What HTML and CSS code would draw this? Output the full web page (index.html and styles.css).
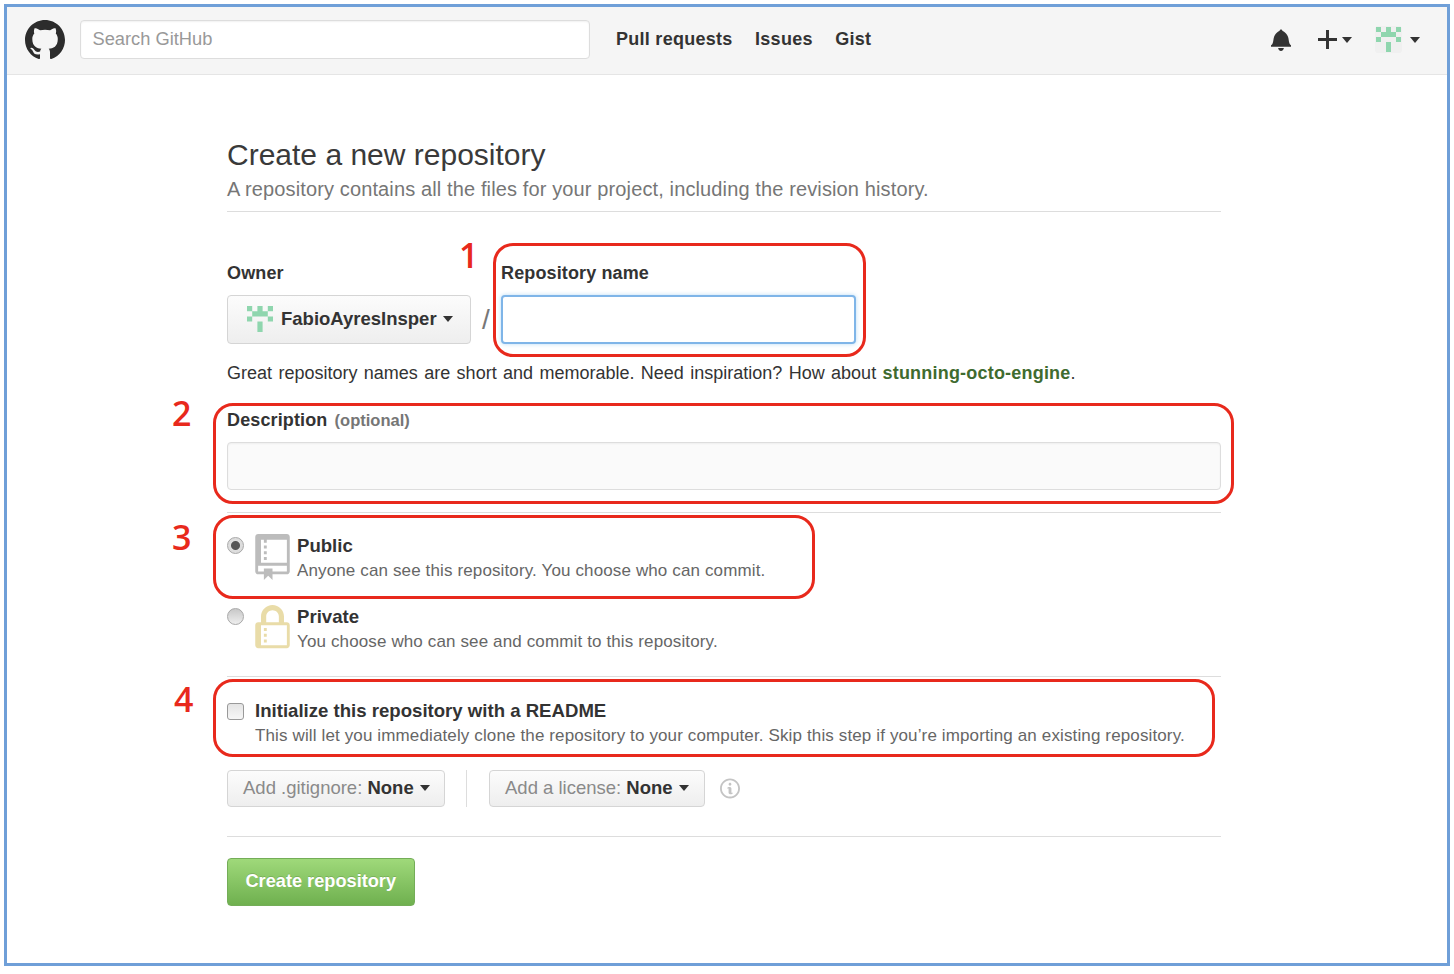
FILE: index.html
```html
<!DOCTYPE html>
<html lang="en">
<head>
<meta charset="utf-8">
<title>Create a new repository</title>
<link rel="stylesheet" href="styles.css">
</head>
<body>
<svg class="defs" width="0" height="0" aria-hidden="true">
  <symbol id="identicon" viewBox="0 0 5 5">
    <path d="M0 0h1v1H0zM2 0h1v1H2zM4 0h1v1H4zM1 1h3v1H1zM0 2h1v1H0zM4 2h1v1H4zM2 3h1v2H2z"/>
  </symbol>
</svg>
<div class="frame">
  <header class="topbar">
    <svg class="logo" viewBox="0 0 16 16"><path d="M8 0C3.58 0 0 3.58 0 8c0 3.54 2.29 6.53 5.47 7.59.4.07.55-.17.55-.38 0-.19-.01-.82-.01-1.49-2.01.37-2.53-.49-2.69-.94-.09-.23-.48-.94-.82-1.13-.28-.15-.68-.52-.01-.53.63-.01 1.08.58 1.23.82.72 1.21 1.87.87 2.33.66.07-.52.28-.87.51-1.07-1.78-.2-3.64-.89-3.64-3.95 0-.87.31-1.59.82-2.15-.08-.2-.36-1.02.08-2.12 0 0 .67-.21 2.2.82.64-.18 1.32-.27 2-.27.68 0 1.36.09 2 .27 1.53-1.04 2.2-.82 2.2-.82.44 1.1.16 1.92.08 2.12.51.56.82 1.27.82 2.15 0 3.07-1.87 3.75-3.65 3.95.29.25.54.73.54 1.48 0 1.07-.01 1.93-.01 2.2 0 .21.15.46.55.38A8.013 8.013 0 0016 8c0-4.42-3.58-8-8-8z"/></svg>
    <div class="search">Search GitHub</div>
    <nav class="nav"><a>Pull requests</a><a>Issues</a><a>Gist</a></nav>
    <div class="tools">
      <svg class="bell" viewBox="0 0 14 16"><path d="M14 12v1H0v-1l.73-.58c.77-.77.81-2.55 1.19-4.42C2.69 3.23 6 2 6 2c0-.55.45-1 1-1s1 .45 1 1c0 0 3.39 1.23 4.16 5 .38 1.88.42 3.66 1.19 4.42l.66.58H14zm-7 4c1.11 0 2-.89 2-2H5c0 1.11.89 2 2 2z"/></svg>
      <div class="plus-group">
        <svg class="plus" viewBox="0 0 18 18"><path d="M7.6 0h2.8v7.6H18v2.8h-7.6V18H7.6v-7.6H0V7.6h7.6z"/></svg>
        <span class="caret"></span>
      </div>
      <div class="avatar-group">
        <div class="avatar"><svg class="identicon" viewBox="0 0 5 5"><use href="#identicon"/></svg></div>
        <span class="caret"></span>
      </div>
    </div>
  </header>

  <main class="page">
    <h1 class="title">Create a new repository</h1>
    <p class="lead">A repository contains all the files for your project, including the revision history.</p>

    <div class="owner-row">
      <div class="owner-col">
        <div class="label">Owner</div>
        <div class="owner-btn">
          <svg class="identicon small" viewBox="0 0 5 5"><use href="#identicon"/></svg>
          <span>FabioAyresInsper</span>
          <span class="caret"></span>
        </div>
      </div>
      <span class="slash">/</span>
      <div class="name-col">
        <div class="label">Repository name</div>
        <div class="name-input"></div>
      </div>
    </div>
    <p class="hint">Great repository names are short and memorable. Need inspiration? How about <strong>stunning-octo-engine</strong>.</p>

    <div class="label desc-label">Description <span class="optional">(optional)</span></div>
    <div class="desc-input"></div>

    <section class="visibility">
      <div class="choice">
        <span class="radio checked"></span>
        <svg class="choice-icon book" viewBox="0 0 12 16"><path d="M4 9H3V8h1v1zm0-3H3v1h1V6zm0-2H3v1h1V4zm0-2H3v1h1V2zm8-1v12c0 .55-.45 1-1 1H6v2l-1.5-1.5L3 16v-2H1c-.55 0-1-.45-1-1V1c0-.55.45-1 1-1h10c.55 0 1 .45 1 1zm-1 10H1v2h2v-1h3v1h5v-2zm0-9H2v8h9V2z"/></svg>
        <div class="choice-text">
          <div class="choice-title">Public</div>
          <div class="choice-desc">Anyone can see this repository. You choose who can commit.</div>
        </div>
      </div>
      <div class="choice">
        <span class="radio"></span>
        <svg class="choice-icon lock" viewBox="0 0 12 16"><path d="M4 13H3v-1h1v1zm8-6v7c0 .55-.45 1-1 1H1c-.55 0-1-.45-1-1V7c0-.55.45-1 1-1h1V4c0-2.2 1.8-4 4-4s4 1.8 4 4v2h1c.55 0 1 .45 1 1zM3.8 6h4.41V4c0-1.22-.98-2.2-2.2-2.2-1.22 0-2.2.98-2.2 2.2v2H3.8zM11 7H2v7h9V7zM4 8H3v1h1V8zm0 2H3v1h1v-1z"/></svg>
        <div class="choice-text">
          <div class="choice-title">Private</div>
          <div class="choice-desc">You choose who can see and commit to this repository.</div>
        </div>
      </div>
    </section>

    <section class="init">
      <div class="init-row">
        <span class="checkbox"></span>
        <div>
          <div class="choice-title">Initialize this repository with a README</div>
          <div class="choice-desc">This will let you immediately clone the repository to your computer. Skip this step if you’re importing an existing repository.</div>
        </div>
      </div>
      <div class="add-row">
        <div class="add-btn gitignore">Add .gitignore: <b>None</b><span class="caret"></span></div>
        <span class="vsep"></span>
        <div class="add-btn license">Add a license: <b>None</b><span class="caret"></span></div>
        <svg class="info" viewBox="0 0 14 16"><path d="M6.3 5.69a.942.942 0 01-.28-.7c0-.28.09-.52.28-.7.19-.18.42-.28.7-.28.28 0 .52.09.7.28.18.19.28.42.28.7 0 .28-.09.52-.28.7a1 1 0 01-.7.3c-.28 0-.52-.11-.7-.3zM8 7.99c-.02-.25-.11-.48-.31-.69-.2-.19-.42-.3-.69-.31H6c-.27.02-.48.13-.69.31-.2.2-.3.44-.31.69h1v3c.02.27.11.5.31.69.2.2.42.31.69.31h1c.27 0 .48-.11.69-.31.2-.19.3-.42.31-.69H8V7.98v.01zM7 2.3c-3.14 0-5.7 2.54-5.7 5.68 0 3.14 2.56 5.7 5.7 5.7s5.7-2.55 5.7-5.7c0-3.15-2.56-5.69-5.7-5.69v.01zM7 .98c3.86 0 7 3.14 7 7s-3.14 7-7 7-7-3.12-7-7 3.14-7 7-7z"/></svg>
      </div>
    </section>

    <div class="submit-row"><div class="create-btn">Create repository</div></div>
  </main>

  <div class="mark mark-1"></div><span class="num num-1">1</span>
  <div class="mark mark-2"></div><span class="num num-2">2</span>
  <div class="mark mark-3"></div><span class="num num-3">3</span>
  <div class="mark mark-4"></div><span class="num num-4">4</span>
</div>
</body>
</html>
```

FILE: styles.css
```css
* { box-sizing: border-box; }
html, body { margin: 0; padding: 0; background: #fff; }
body {
  font-family: "Liberation Sans", Arial, sans-serif;
  color: #333;
  padding: 4px;
  height: 974px;
  overflow: hidden;
}
.defs { position: absolute; }

.frame {
  position: relative;
  width: 1446px;
  height: 962px;
  border: 3px solid #6f9fd8;
  background: #fff;
}

/* top bar */
.topbar {
  display: flex;
  align-items: center;
  height: 68px;
  padding: 0 0 0 18px;
  background: #f5f5f5;
  border-bottom: 1px solid #e5e5e5;
}
.logo { width: 40px; height: 40px; fill: #2c2c2c; flex: none; margin-top: -2px; }
.search {
  width: 510px;
  height: 39px;
  margin-left: 15px;
  margin-top: -2px;
  padding: 0 0 2px 11.5px;
  display: flex;
  align-items: center;
  background: #fff;
  border: 1px solid #ddd;
  border-radius: 4px;
  color: #999;
  font-size: 18.3px;
  box-shadow: inset 0 1px 2px rgba(0, 0, 0, .06);
}
.nav { display: flex; gap: 22.5px; margin-left: 26px; margin-top: -2px; }
.nav a { font-size: 18px; font-weight: 700; color: #333; letter-spacing: .27px; }
.tools {
  display: flex;
  align-items: center;
  margin-left: auto;
  margin-top: -2px;
  padding-right: 27px;
}
.bell { width: 20px; height: 23px; fill: #333; }
.plus-group { display: flex; align-items: center; gap: 5px; margin-left: 27px; }
.plus { width: 19px; height: 19px; fill: #333; }
.avatar-group { display: flex; align-items: center; gap: 8px; margin-left: 23px; }
.avatar { width: 27px; height: 27px; background: #f0f0f0; border-radius: 3px; padding: 1px; }
.identicon { display: block; width: 25px; height: 25px; fill: #8fd6ae; }
.caret {
  display: inline-block;
  width: 0;
  height: 0;
  border-style: solid;
  border-width: 6px 5.5px 0;
  border-color: #333 transparent transparent;
}

/* page */
.page { width: 994px; margin-left: 220px; padding-top: 62px; }
.title { margin: 0; font-size: 30px; line-height: 36px; font-weight: 400; color: #3a3a3a; }
.lead {
  margin: 2px 0 0;
  padding-bottom: 8px;
  height: 37px;
  font-size: 20px;
  line-height: 28px;
  letter-spacing: .126px;
  color: #767676;
  border-bottom: 1px solid #ddd;
}
.owner-row { display: flex; align-items: flex-end; margin-top: 48px; }
.label { font-size: 18px; line-height: 26px; font-weight: 700; color: #333; margin-bottom: 9px; letter-spacing: .13px; }
.owner-btn {
  display: flex;
  align-items: center;
  width: 244px;
  height: 49px;
  padding: 0 19px 2px;
  background: linear-gradient(#fcfcfc, #eee);
  border: 1px solid #d5d5d5;
  border-radius: 4px;
  font-size: 18.5px;
  font-weight: 700;
  color: #333;
}
.owner-btn .caret { margin-left: 6px; }
.identicon.small { flex: none; width: 26px; height: 26px; margin-right: 8px; }
.slash { width: 30px; text-align: center; font-size: 28px; line-height: 49px; color: #777; }
.name-col { width: 355px; }
.name-input {
  height: 49px;
  background: #fff;
  border: 2px solid #7fb5e8;
  border-radius: 4px;
  box-shadow: 0 0 4px rgba(81, 167, 232, .4);
}
.hint { margin: 14px 0 0; font-size: 18px; line-height: 30px; color: #333; word-spacing: 1.38px; }
.hint strong { color: #3f6b2f; letter-spacing: .2px; }
.desc-label { margin: 19px 0 9px; }
.optional { color: #767676; font-size: 16.5px; margin-left: 2px; letter-spacing: 0; }
.desc-input {
  height: 48px;
  background: #fafafa;
  border: 1px solid #ddd;
  border-radius: 4px;
  box-shadow: inset 0 1px 2px rgba(0, 0, 0, .05);
}

/* visibility */
.visibility {
  margin-top: 22px;
  padding-top: 21px;
  height: 165px;
  border-top: 1px solid #ddd;
  border-bottom: 1px solid #ddd;
}
.choice { display: flex; height: 71px; }
.radio {
  flex: none;
  width: 17px;
  height: 17px;
  margin-top: 3px;
  border-radius: 50%;
  background: linear-gradient(#c8c8c8, #eee);
  border: 1px solid #a8a8a8;
}
.radio.checked { background: radial-gradient(circle, #555 0 4px, #ddd 5px); }
.choice-icon { flex: none; width: 35px; height: 46px; margin-left: 11px; }
.book { fill: #bcbcbc; }
.lock { fill: #e9dca8; }
.choice-text { margin-left: 7px; }
.choice-title { font-size: 18.6px; line-height: 24px; font-weight: 700; color: #333; }
.choice-desc { font-size: 17px; line-height: 25px; color: #666; letter-spacing: .13px; }

/* init */
.init { padding-top: 22px; }
.init-row { display: flex; gap: 11px; }
.checkbox {
  flex: none;
  width: 17px;
  height: 17px;
  margin-top: 4px;
  background: linear-gradient(#e4e4e4, #f6f6f6);
  border: 1px solid #999;
  border-radius: 3px;
}
.add-row { display: flex; align-items: center; margin-top: 22px; }
.add-btn {
  display: flex;
  align-items: center;
  height: 37px;
  padding: 0 15px 2px;
  background: linear-gradient(#fcfcfc, #eee);
  border: 1px solid #d5d5d5;
  border-radius: 4px;
  font-size: 18.5px;
  color: #8a8a8a;
  white-space: pre;
}
.add-btn b { color: #333; }
.add-btn .caret { margin-left: 6px; }
.gitignore { width: 218px; }
.license { width: 216px; }
.vsep { width: 1px; height: 37px; margin: 0 22px 0 21px; background: #ddd; }
.info { width: 20px; height: 23px; margin-left: 15px; fill: #c4c4c4; }
.submit-row { margin-top: 29px; padding-top: 21px; border-top: 1px solid #ddd; }
.create-btn {
  display: flex;
  align-items: center;
  justify-content: center;
  width: 187.5px;
  height: 48px;
  padding-bottom: 2px;
  background: linear-gradient(#9fd97a, #6fb04f);
  border: 1px solid #74ad58;
  border-radius: 4px;
  font-size: 18.2px;
  font-weight: 700;
  color: #fff;
  text-shadow: 0 -1px 0 rgba(0, 0, 0, .15);
}

/* annotations over the form */
.mark { position: absolute; border: 3px solid #e8291c; border-radius: 20px; }
.mark-1 { left: 486px; top: 236px; width: 373px; height: 114px; }
.mark-2 { left: 206px; top: 396px; width: 1021px; height: 101px; }
.mark-3 { left: 206px; top: 508px; width: 602px; height: 84px; }
.mark-4 { left: 206px; top: 672px; width: 1002px; height: 78px; }
.num {
  position: absolute;
  font-family: "Open Sans", sans-serif;
  font-size: 34px;
  font-weight: 600;
  line-height: 40px;
  color: #e8291c;
}
.num-1 { left: 452px; top: 228px; }
.num-2 { left: 165px; top: 386px; }
.num-3 { left: 165px; top: 510px; }
.num-4 { left: 167px; top: 672px; }
```
